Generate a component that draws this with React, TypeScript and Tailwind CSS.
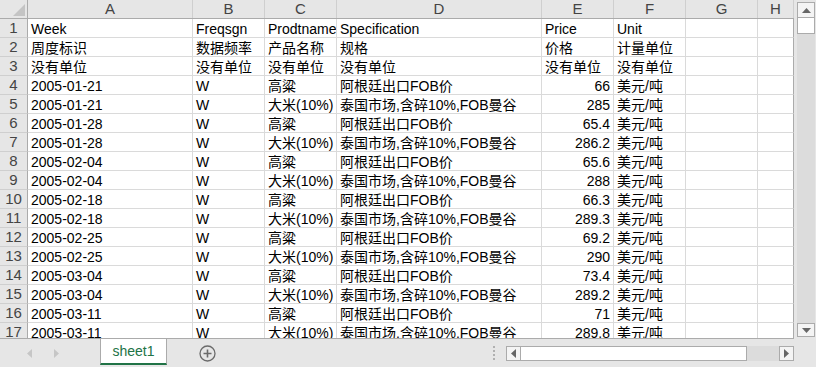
import React from 'react';

const font = { fontFamily: '"Liberation Sans", "Noto Sans CJK SC", sans-serif' };

const colWidths = ['w-[165px]', 'w-[72px]', 'w-[72px]', 'w-[205px]', 'w-[72px]', 'w-[72px]', 'w-[72px]', 'w-[36px]'];
const letters = ['A', 'B', 'C', 'D', 'E', 'F', 'G', 'H'];

type Row = { cells: string[]; num?: boolean };

const sorghum = ['高粱', '阿根廷出口FOB价'];
const rice = ['大米(10%)', '泰国市场,含碎10%,FOB曼谷'];

const data: [string, boolean, string][] = [
  ['2005-01-21', true, '66'],
  ['2005-01-21', false, '285'],
  ['2005-01-28', true, '65.4'],
  ['2005-01-28', false, '286.2'],
  ['2005-02-04', true, '65.6'],
  ['2005-02-04', false, '288'],
  ['2005-02-18', true, '66.3'],
  ['2005-02-18', false, '289.3'],
  ['2005-02-25', true, '69.2'],
  ['2005-02-25', false, '290'],
  ['2005-03-04', true, '73.4'],
  ['2005-03-04', false, '289.2'],
  ['2005-03-11', true, '71'],
  ['2005-03-11', false, '289.8'],
];

const rows: Row[] = [
  { cells: ['Week', 'Freqsgn', 'Prodtname', 'Specification', 'Price', 'Unit', '', ''] },
  { cells: ['周度标识', '数据频率', '产品名称', '规格', '价格', '计量单位', '', ''] },
  { cells: ['没有单位', '没有单位', '没有单位', '没有单位', '没有单位', '没有单位', '', ''] },
  ...data.map(([d, s, p]) => ({
    cells: [d, 'W', ...(s ? sorghum : rice), p, '美元/吨', '', ''],
    num: true,
  })),
];

function ColumnHeader() {
  return (
    <div className="flex h-[19px] bg-[#e6e6e6] border-b border-[#ababab]">
      <div className="w-[28px] shrink-0 border-r border-[#ababab] flex items-end justify-end pr-[2px] pb-[2px]">
        <svg width="12" height="12" viewBox="0 0 12 12">
          <polygon points="12,0 12,12 0,12" fill="#c4c4c4" />
        </svg>
      </div>
      {letters.map((l, i) => (
        <div
          key={l}
          className={`${colWidths[i]} shrink-0 border-r border-[#cfcfcf] text-[15px] leading-[18px] text-center text-[#444] overflow-hidden`}
        >
          {l}
        </div>
      ))}
    </div>
  );
}

function DataRow({ row, index }: { row: Row; index: number }) {
  return (
    <div className="flex h-[19px]">
      <div className="w-[28px] shrink-0 bg-[#e6e6e6] border-r border-[#ababab] border-b border-b-[#cfcfcf] text-[15px] leading-[18px] text-center text-[#444]">
        {index + 1}
      </div>
      {row.cells.map((c, i) => (
        <div
          key={i}
          className={`${colWidths[i]} shrink-0 border-r border-b border-[#dadada] px-[3px] pt-[1px] text-[14px] leading-[18px] text-black whitespace-nowrap overflow-hidden ${
            row.num && i === 4 ? 'text-right' : 'text-left'
          } ${i === 7 ? 'border-r-[#ababab]' : ''}`}
        >
          {c}
        </div>
      ))}
    </div>
  );
}

function VScroll() {
  return (
    <div className="w-[22px] h-full bg-[#e6e6e6] flex pl-[3px] py-[2px]">
      <div className="w-[18px] h-full bg-[#dcdcdc] flex flex-col justify-between">
        <div className="flex flex-col">
          <div className="h-[16px] bg-[#f4f4f4] border border-[#ababab] flex items-center justify-center">
            <svg width="9" height="5" viewBox="0 0 9 5">
              <polygon points="4.5,0 9,5 0,5" fill="#666" />
            </svg>
          </div>
          <div className="h-[16px] bg-white border border-t-0 border-[#ababab]" />
        </div>
        <div className="h-[14px] bg-[#f4f4f4] border border-[#ababab] flex items-center justify-center">
          <svg width="9" height="5" viewBox="0 0 9 5">
            <polygon points="0,0 9,0 4.5,5" fill="#666" />
          </svg>
        </div>
      </div>
    </div>
  );
}

function BottomBar() {
  return (
    <div className="h-[28px] bg-[#e6e6e6] flex items-start" style={font}>
      <div className="w-[100px] h-full flex items-center pl-[27px] gap-[22px]">
        <svg width="5" height="9" viewBox="0 0 5 9">
          <polygon points="5,0 5,9 0,4.5" fill="#c6c6c6" />
        </svg>
        <svg width="5" height="9" viewBox="0 0 5 9">
          <polygon points="0,0 0,9 5,4.5" fill="#c6c6c6" />
        </svg>
      </div>
      <div className="w-[67px] h-[26px] bg-white border-x border-[#ababab] border-b-2 border-b-[#217346] flex items-center justify-center text-[14px] text-[#217346]">
        sheet1
      </div>
      <div className="w-[315px] h-full flex items-center pl-[32px]">
        <svg width="17" height="17" viewBox="0 0 17 17">
          <circle cx="8.5" cy="8.5" r="7.5" fill="none" stroke="#6b6b6b" strokeWidth="1.3" />
          <path d="M8.5 4.5v8M4.5 8.5h8" stroke="#6b6b6b" strokeWidth="1.6" />
        </svg>
      </div>
      <div className="w-[24px] h-full flex flex-col items-center justify-center gap-[2px]">
        <span className="w-[2px] h-[2px] bg-[#b0b0b0]" />
        <span className="w-[2px] h-[2px] bg-[#b0b0b0]" />
        <span className="w-[2px] h-[2px] bg-[#b0b0b0]" />
        <span className="w-[2px] h-[2px] bg-[#b0b0b0]" />
      </div>
      <div className="mt-[7px] h-[15px] w-[288px] flex">
        <div className="w-[15px] h-full bg-[#f4f4f4] border border-[#ababab] flex items-center justify-center">
          <svg width="5" height="9" viewBox="0 0 5 9">
            <polygon points="5,0 5,9 0,4.5" fill="#666" />
          </svg>
        </div>
        <div className="flex-1 h-full bg-[#dcdcdc] flex">
          <div className="w-[226px] h-full bg-white border border-l-0 border-[#ababab]" />
        </div>
        <div className="w-[15px] h-full bg-[#f4f4f4] border border-[#ababab] flex items-center justify-center">
          <svg width="5" height="9" viewBox="0 0 5 9">
            <polygon points="0,0 0,9 5,4.5" fill="#666" />
          </svg>
        </div>
      </div>
    </div>
  );
}

export default function App() {
  return (
    <div className="w-[816px] h-[367px] bg-white overflow-hidden flex flex-col" style={font}>
      <div className="h-[339px] flex">
        <div className="w-[794px] h-full overflow-hidden border-b border-[#ababab]">
          <ColumnHeader />
          {rows.map((r, i) => (
            <DataRow key={i} row={r} index={i} />
          ))}
        </div>
        <VScroll />
      </div>
      <BottomBar />
    </div>
  );
}
